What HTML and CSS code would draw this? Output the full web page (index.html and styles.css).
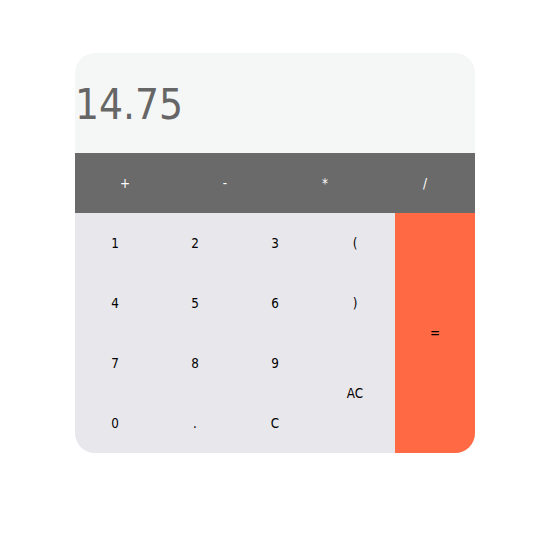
FILE: index.html
```html
<!DOCTYPE html>
<html>
<head>
<meta charset="utf-8">
<link rel="stylesheet" href="styles.css">
</head>
<body>
<div class="calc">
  <div class="display">14.75</div>
  <div class="ops">
    <button class="op">+</button>
    <button class="op">-</button>
    <button class="op">*</button>
    <button class="op">/</button>
  </div>
  <div class="pad">
    <button class="key">1</button>
    <button class="key">2</button>
    <button class="key">3</button>
    <button class="key">(</button>
    <button class="key eq">=</button>
    <button class="key">4</button>
    <button class="key">5</button>
    <button class="key">6</button>
    <button class="key">)</button>
    <button class="key">7</button>
    <button class="key">8</button>
    <button class="key">9</button>
    <button class="key ac">AC</button>
    <button class="key">0</button>
    <button class="key">.</button>
    <button class="key">C</button>
  </div>
</div>
</body>
</html>
```
FILE: styles.css
```css
html, body {
  margin: 0;
  padding: 0;
  background: #ffffff;
}
body {
  padding: 53px 0 0 75px;
  font-family: "DejaVu Sans Condensed", "DejaVu Sans", sans-serif;
}
.calc {
  width: 400px;
  border-radius: 20px;
  overflow: hidden;
}
.display {
  height: 100px;
  line-height: 104px;
  font-size: 42px;
  color: #666666;
  background: #f5f7f6;
  padding-left: 0;
}
button {
  border: none;
  margin: 0;
  padding: 0;
  font-family: "DejaVu Sans Condensed", "DejaVu Sans", sans-serif;
  font-size: 13.333px;
  cursor: pointer;
}
.ops {
  display: grid;
  grid-template-columns: repeat(4, 100px);
  height: 60px;
  background: #6a6a6a;
}
.op {
  background: transparent;
  color: #ffffff;
}
.pad {
  display: grid;
  grid-template-columns: repeat(5, 80px);
  grid-template-rows: repeat(4, 60px);
  background: #e8e7ec;
}
.key {
  background: transparent;
  color: #000000;
}
.eq {
  grid-column: 5;
  grid-row: 1 / span 4;
  background: #ff6a45;
}
.ac {
  grid-column: 4;
  grid-row: 3 / span 2;
}
```
